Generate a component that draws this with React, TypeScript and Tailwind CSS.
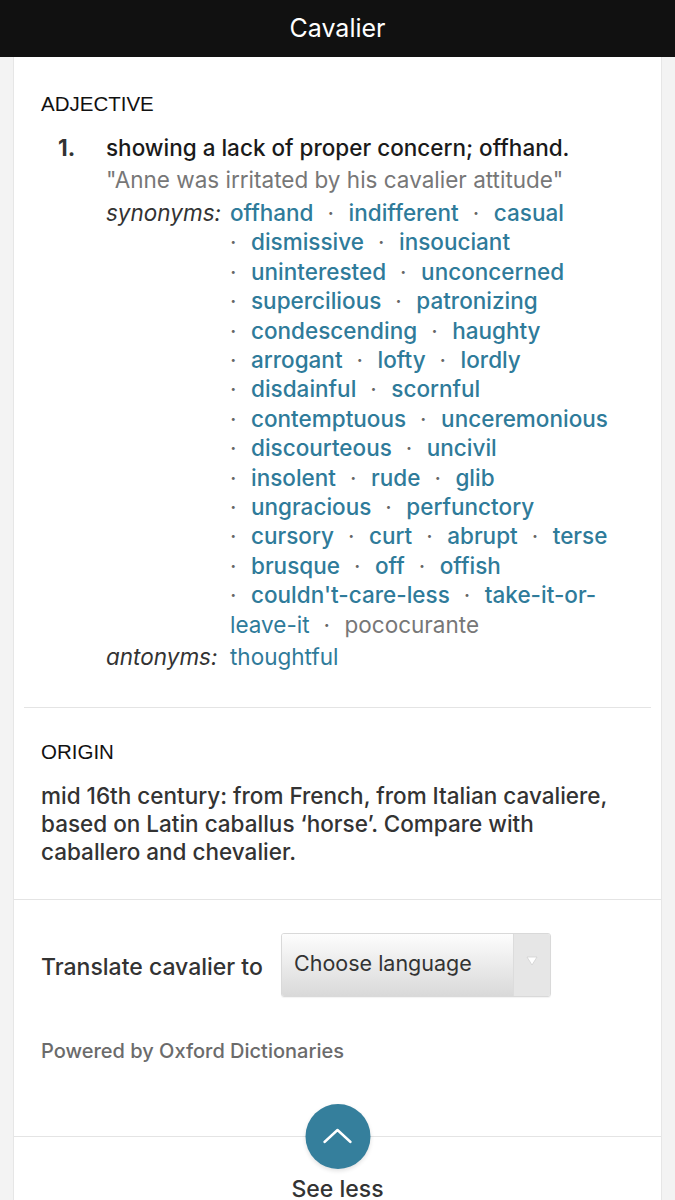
import React from 'react';

const font = { fontFamily: 'Inter, Roboto, "Liberation Sans", sans-serif' };
const helv = { fontFamily: '"Liberation Sans", Arial, sans-serif' };

const rows: { words: string[]; lead: boolean }[] = [
  { words: ['offhand', 'indifferent', 'casual'], lead: false },
  { words: ['dismissive', 'insouciant'], lead: true },
  { words: ['uninterested', 'unconcerned'], lead: true },
  { words: ['supercilious', 'patronizing'], lead: true },
  { words: ['condescending', 'haughty'], lead: true },
  { words: ['arrogant', 'lofty', 'lordly'], lead: true },
  { words: ['disdainful', 'scornful'], lead: true },
  { words: ['contemptuous', 'unceremonious'], lead: true },
  { words: ['discourteous', 'uncivil'], lead: true },
  { words: ['insolent', 'rude', 'glib'], lead: true },
  { words: ['ungracious', 'perfunctory'], lead: true },
  { words: ['cursory', 'curt', 'abrupt', 'terse'], lead: true },
  { words: ['brusque', 'off', 'offish'], lead: true },
  { words: ["couldn't-care-less", 'take-it-or-'], lead: true },
];

const Dot = ({ mid }: { mid?: boolean }) => (
  <span className={`inline-block w-[21px] text-[#666] font-normal ${mid ? 'ml-[14px]' : ''}`}>·</span>
);

const SynonymRow = ({ words, lead }: { words: string[]; lead: boolean }) => (
  <div className="whitespace-nowrap">
    {lead && <Dot />}
    {words.map((w, i) => (
      <React.Fragment key={w}>
        {i > 0 && <Dot mid />}
        <span className="text-[#2f7b9a] font-medium">{w}</span>
      </React.Fragment>
    ))}
  </div>
);

export default function App() {
  return (
    <div className="w-[675px] h-[1200px] overflow-hidden bg-[#f3f3f3]" style={font}>
      <header className="h-[57px] bg-[#111111] flex items-center justify-center text-white text-[25px]">
        Cavalier
      </header>

      <main className="mx-[13px] bg-white border-x border-[#e6e6e6] h-[1143px] overflow-hidden">
        {/* definition */}
        <section className="px-[27px] pt-[35px] pb-[35px] text-[22.5px]">
          <div className="text-[20.5px] text-[#111] leading-[24px]" style={helv}>
            ADJECTIVE
          </div>
          <div className="flex mt-[17px]">
            <div className="w-[65px] pl-[17px] font-bold text-[#333] leading-[30px]">1.</div>
            <div className="flex-1">
              <div className="text-[#1a1a1a] leading-[30px] font-medium">showing a lack of proper concern; offhand.</div>
              <div className="text-[#777] leading-[30px] mt-[2px]">"Anne was irritated by his cavalier attitude"</div>
              <div className="flex mt-[3px] leading-[29.4px]">
                <div className="w-[124px] italic text-[#333]">synonyms:</div>
                <div>
                  {rows.map((r, i) => (
                    <SynonymRow key={i} words={r.words} lead={r.lead} />
                  ))}
                  <div className="whitespace-nowrap">
                    <span className="text-[#2f7b9a]">leave-it</span>
                    <Dot mid />
                    <span className="text-[#777]">pococurante</span>
                  </div>
                </div>
              </div>
              <div className="flex mt-[3px] leading-[29.4px]">
                <div className="w-[124px] italic text-[#333]">antonyms:</div>
                <span className="text-[#2f7b9a]">thoughtful</span>
              </div>
            </div>
          </div>
        </section>

        <div className="mx-[10px] border-t border-[#e4e4e4]" />

        {/* origin */}
        <section className="px-[27px] pt-[32px] pb-[33px]">
          <div className="text-[20.5px] text-[#111] leading-[24px]" style={helv}>
            ORIGIN
          </div>
          <p className="mt-[18px] text-[22.5px] leading-[28px] text-[#333] font-medium">
            mid 16th century: from French, from Italian cavaliere, based on Latin caballus ‘horse’. Compare with caballero and chevalier.
          </p>
        </section>

        <div className="border-t border-[#e4e4e4]" />

        {/* translate */}
        <section className="px-[27px] pt-[33px]">
          <div className="flex items-center">
            <span className="text-[23px] text-[#333] font-medium w-[240px] mt-[6px]">Translate cavalier to</span>
            <div className="w-[270px] h-[64px] rounded-[3px] border border-[#d9d9d9] flex overflow-hidden shadow-[0_1px_1px_rgba(0,0,0,0.05)]">
              <div className="flex-1 bg-gradient-to-b from-[#fdfdfd] to-[#d9d9d9] flex items-center pl-[12px] pb-[2px] text-[21.5px] text-[#333]">
                Choose language
              </div>
              <div className="w-[37px] bg-[#e6e6e6] border-l border-[#dcdcdc] flex justify-center pt-[22px]">
                <svg width="12" height="10" viewBox="0 0 12 10">
                  <path d="M1 1 L11 1 L6 9 Z" fill="#ffffff" stroke="#d0d0d0" strokeWidth="0.8" />
                </svg>
              </div>
            </div>
          </div>
          <div className="mt-[39px] text-[20px] text-[#6b6b6b] font-medium">Powered by Oxford Dictionaries</div>
        </section>

        {/* see less */}
        <div className="relative mt-[70px] border-t border-[#e4e4e4]">
          <div className="absolute left-1/2 -translate-x-1/2 -top-[33px] w-[65px] h-[65px] rounded-full bg-[#357f9c] flex items-center justify-center shadow-[0_2px_4px_rgba(0,0,0,0.12)]">
            <svg width="30" height="18" viewBox="0 0 30 18" fill="none">
              <path d="M2 15 L15 3 L28 15" stroke="#ffffff" strokeWidth="2.4" strokeLinecap="round" strokeLinejoin="round" />
            </svg>
          </div>
          <div className="pt-[38px] text-center text-[23px] leading-[28px] text-[#333] font-medium">See less</div>
        </div>
      </main>
    </div>
  );
}
